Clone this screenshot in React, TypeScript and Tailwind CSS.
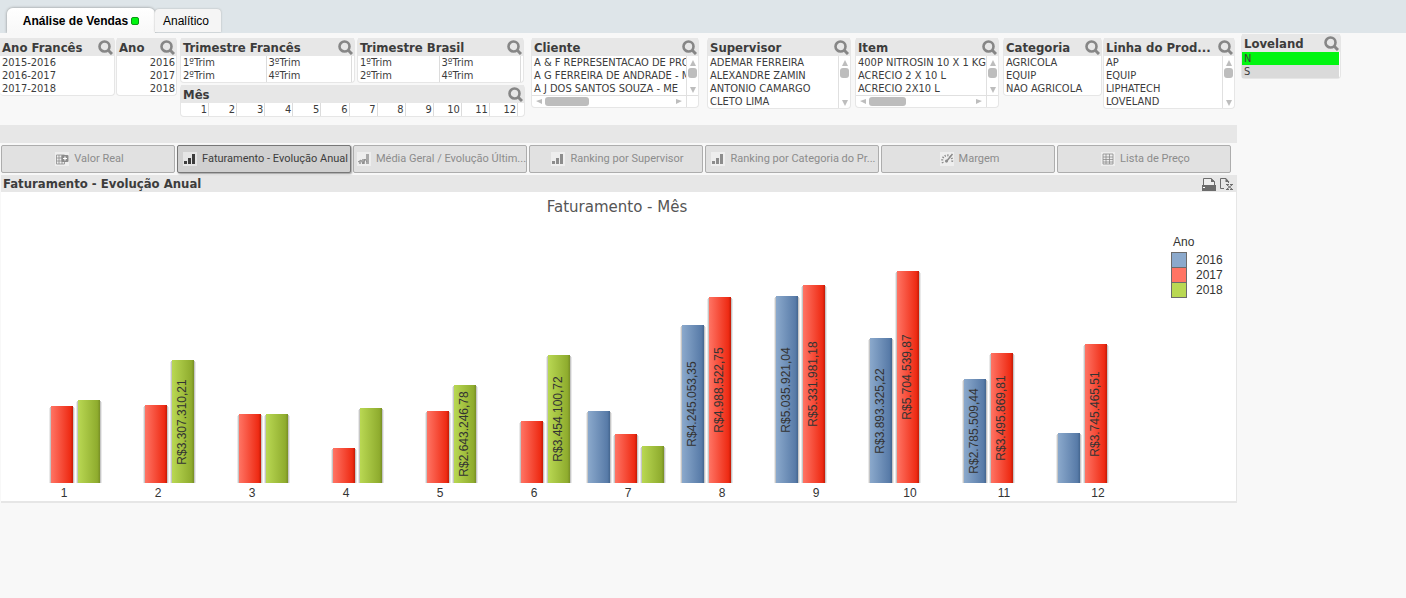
import { useState } from "react";
import type { ReactNode } from "react";
import clsx from "clsx";

type Year = "2016" | "2017" | "2018";

interface MonthSales {
  month: number;
  sales: Partial<Record<Year, number>>;
}

const SALES: MonthSales[] = [
  { month: 1, sales: { "2017": 2071300, "2018": 2232700 } },
  { month: 2, sales: { "2017": 2098200, "2018": 3307310.21 } },
  { month: 3, sales: { "2017": 1856100, "2018": 1856100 } },
  { month: 4, sales: { "2017": 941500, "2018": 2017500 } },
  { month: 5, sales: { "2017": 1936800, "2018": 2643246.78 } },
  { month: 6, sales: { "2017": 1667800, "2018": 3454100.72 } },
  { month: 7, sales: { "2016": 1936800, "2017": 1318100, "2018": 995300 } },
  { month: 8, sales: { "2016": 4245053.35, "2017": 4988522.75 } },
  { month: 9, sales: { "2016": 5035921.04, "2017": 5331981.18 } },
  { month: 10, sales: { "2016": 3893325.22, "2017": 5704539.87 } },
  { month: 11, sales: { "2016": 2785509.44, "2017": 3495869.81 } },
  { month: 12, sales: { "2016": 1345000, "2017": 3745465.51 } },
];

const YEARS: { year: Year; offset: number; colors: [string, string, string] }[] =
  [
    { year: "2016", offset: -40, colors: ["#8ba9cc", "#587ba8", "#44668f"] },
    { year: "2017", offset: -13, colors: ["#ff7464", "#ee2b14", "#c41b06"] },
    { year: "2018", offset: 14, colors: ["#b9d853", "#8fac2e", "#788f25"] },
  ];

const BASELINE = 291;
const VALUE_PER_PIXEL = 26890;
const MIN_LABEL_HEIGHT = 95;

function formatCurrency(value: number) {
  const [whole, cents] = value.toFixed(2).split(".");
  return `R$${whole.replace(/\B(?=(\d{3})+$)/g, ".")},${cents}`;
}

function SearchButton({ label }: { label: string }) {
  return (
    <button
      type="button"
      aria-label={`Pesquisar ${label}`}
      className="shrink-0 cursor-pointer"
    >
      <svg width="15" height="15" viewBox="0 0 15 15" fill="none">
        <circle cx="6.5" cy="6.5" r="5" stroke="#868686" strokeWidth="2.6" />
        <path d="M10 10l4 4" stroke="#868686" strokeWidth="3" />
      </svg>
    </button>
  );
}

function Panel({
  title,
  className,
  children,
}: {
  title: string;
  className?: string;
  children: ReactNode;
}) {
  return (
    <section
      className={clsx(
        "min-w-0 rounded-sm border-r border-b border-[#e6e6e6] bg-white",
        className,
      )}
    >
      <div className="flex h-[18px] items-center justify-between bg-[#e7e7e7] pr-px pl-[2px]">
        <h2 className="pt-px text-[13px] leading-[17px] font-bold whitespace-nowrap text-[#3c3c3c]">
          {title}
        </h2>
        <SearchButton label={title} />
      </div>
      {children}
    </section>
  );
}

function Options({
  items,
  alignRight = false,
}: {
  items: string[];
  alignRight?: boolean;
}) {
  return (
    <ul className="min-w-0 flex-1 overflow-hidden">
      {items.map((item) => (
        <li key={item}>
          <button
            type="button"
            className={clsx(
              "block w-full pt-px text-[11px] leading-3 whitespace-nowrap",
              alignRight ? "pr-px text-right" : "pl-[2px] text-left",
            )}
          >
            {item}
          </button>
        </li>
      ))}
    </ul>
  );
}

function Arrow({ points }: { points: string }) {
  return (
    <svg width="8" height="7" viewBox="0 0 8 7" className="shrink-0">
      <polygon points={points} fill="#bdbdbd" />
    </svg>
  );
}

function VerticalScroll() {
  return (
    <div className="flex w-3 shrink-0 flex-col items-center border-l border-[#e0e0e0] pt-1 pb-px">
      <Arrow points="4,0 7,6 1,6" />
      <div className="mt-px h-[10px] w-[9px] rounded-[3px] bg-[#bdbdbd]" />
      <div className="flex-1" />
      <Arrow points="1,0 7,0 4,6" />
    </div>
  );
}

function HorizontalScroll() {
  return (
    <div className="flex h-3 border-t border-[#e0e0e0]">
      <div className="flex flex-1 items-center gap-[2px] px-[3px]">
        <Arrow points="1,3 7,1 7,6" />
        <div className="h-[9px] w-[30%] rounded-[3px] bg-[#bdbdbd]" />
        <div className="flex-1" />
        <Arrow points="7,3 1,1 1,6" />
      </div>
      <div className="w-3 border-l border-[#e0e0e0]" />
    </div>
  );
}

function QuarterPanel({ title }: { title: string }) {
  return (
    <Panel title={title} className="border-l">
      <div className="flex pr-[2px]">
        <Options items={["1ºTrim", "2ºTrim"]} />
        <div className="flex min-w-0 flex-1 border-x border-[#dcdcdc]">
          <Options items={["3ºTrim", "4ºTrim"]} />
        </div>
      </div>
    </Panel>
  );
}

function MonthPanel() {
  return (
    <Panel title="Mês" className="border-l">
      <div className="grid grid-cols-12 pr-[6px]">
        {SALES.map(({ month }) => (
          <button
            key={month}
            type="button"
            className="border-r border-[#dcdcdc] pt-px pr-px text-right text-[11px] leading-3"
          >
            {month}
          </button>
        ))}
      </div>
    </Panel>
  );
}

function Filters() {
  return (
    <div className="grid grid-cols-[116fr_64fr_351fr_176fr_148fr_148fr_100fr_134fr] items-start pt-[5px]">
      <div className="min-w-0 pr-px">
        <Panel title="Ano Francês">
          <div className="flex">
            <Options items={["2015-2016", "2016-2017", "2017-2018"]} />
          </div>
        </Panel>
      </div>
      <div className="min-w-0 pr-[3px]">
        <Panel title="Ano" className="border-l">
          <div className="flex">
            <Options items={["2016", "2017", "2018"]} alignRight />
          </div>
        </Panel>
      </div>
      <div className="min-w-0 pr-[6px]">
        <div className="mb-[2px] grid grid-cols-[175fr_167fr] gap-x-[2px] pr-px">
          <QuarterPanel title="Trimestre Francês" />
          <QuarterPanel title="Trimestre Brasil" />
        </div>
        <MonthPanel />
      </div>
      <div className="min-w-0 pr-2">
        <Panel title="Cliente" className="border-l">
          <div className="flex">
            <Options
              items={[
                "A & F REPRESENTACAO DE PRO",
                "A G FERREIRA DE ANDRADE - M",
                "A J DOS SANTOS SOUZA - ME",
              ]}
            />
            <VerticalScroll />
          </div>
          <HorizontalScroll />
        </Panel>
      </div>
      <div className="min-w-0 pr-1">
        <Panel title="Supervisor" className="border-l">
          <div className="flex">
            <Options
              items={[
                "ADEMAR FERREIRA",
                "ALEXANDRE ZAMIN",
                "ANTONIO CAMARGO",
                "CLETO LIMA",
              ]}
            />
            <VerticalScroll />
          </div>
        </Panel>
      </div>
      <div className="min-w-0 pr-1">
        <Panel title="Item" className="border-l">
          <div className="flex">
            <Options
              items={[
                "400P NITROSIN 10 X 1 KG",
                "ACRECIO 2 X 10 L",
                "ACRECIO 2X10 L",
              ]}
            />
            <VerticalScroll />
          </div>
          <HorizontalScroll />
        </Panel>
      </div>
      <div className="min-w-0 pr-px">
        <Panel title="Categoria" className="border-l">
          <div className="flex">
            <Options items={["AGRICOLA", "EQUIP", "NAO AGRICOLA"]} />
          </div>
        </Panel>
      </div>
      <div className="min-w-0 pr-[2px]">
        <Panel title="Linha do Prod..." className="border-l">
          <div className="flex">
            <Options items={["AP", "EQUIP", "LIPHATECH", "LOVELAND"]} />
            <VerticalScroll />
          </div>
        </Panel>
      </div>
    </div>
  );
}

type IconKind = "tableAdd" | "bars" | "trend" | "gauge" | "table";

function ViewIcon({ kind }: { kind: IconKind }) {
  return (
    <svg
      width="14"
      height="14"
      viewBox="0 0 14 14"
      fill="none"
      className="shrink-0"
    >
      <rect width="14" height="14" fill="#fff" opacity="0.45" />
      {kind === "bars" && (
        <path d="M1 9h3v3H1zM5 6h3v6H5zM9 2h3v10H9z" fill="currentColor" />
      )}
      {kind === "trend" && (
        <>
          <path
            d="M2 9h2v3H2zM5 7h3v5H5zM9 2h3v10H9z"
            fill="currentColor"
            opacity="0.7"
          />
          <path
            d="M1 10l3-2 2 4 2-5 2 3"
            stroke="currentColor"
            strokeWidth="1"
          />
        </>
      )}
      {kind === "table" && (
        <path
          d="M2 2h10v10H2zM2 5h10M2 7.500h10M2 10h10M5 2v10M8.500 2v10"
          stroke="currentColor"
          strokeWidth="0.8"
        />
      )}
      {kind === "tableAdd" && (
        <>
          <path
            d="M1.500 3h8v9h-8zM1.500 6h8M1.500 9h8M4 3v9M7 3v9"
            stroke="currentColor"
            strokeWidth="0.8"
          />
          <rect x="6.500" y="3" width="7" height="7" rx="1" fill="currentColor" />
          <path d="M10 4.500v4M8 6.500h4" stroke="#fff" strokeWidth="1.2" />
        </>
      )}
      {kind === "gauge" && (
        <>
          <path
            d="M3 11a5 5 0 1 1 8.500 0"
            stroke="currentColor"
            strokeWidth="2"
            strokeDasharray="1.200 1.400"
          />
          <path d="M6 10l6.500-8" stroke="currentColor" strokeWidth="1.6" />
          <circle cx="6.500" cy="9" r="1.500" fill="currentColor" />
        </>
      )}
    </svg>
  );
}

const VIEWS: { label: string; icon: IconKind }[] = [
  { label: "Valor Real", icon: "tableAdd" },
  { label: "Faturamento - Evolução Anual", icon: "bars" },
  { label: "Média Geral / Evolução Últim...", icon: "trend" },
  { label: "Ranking por Supervisor", icon: "bars" },
  { label: "Ranking por Categoria do Pr...", icon: "bars" },
  { label: "Margem", icon: "gauge" },
  { label: "Lista de Preço", icon: "table" },
];

function ViewButtons() {
  const [active, setActive] = useState("Faturamento - Evolução Anual");

  return (
    <div className="flex gap-[2px] py-[2px] pr-[6px] pl-px">
      {VIEWS.map(({ label, icon }) => (
        <button
          key={label}
          type="button"
          onClick={() => setActive(label)}
          className={clsx(
            "flex h-7 min-w-0 flex-1 items-center justify-center gap-[5px] rounded-xs border pl-[3px] font-[Roboto,Tahoma,sans-serif] text-[11px] whitespace-nowrap",
            active === label
              ? "border-[#777] bg-[#d0d0d0] text-[#3c3c3c] shadow-[1px_1px_2px_#999]"
              : "border-[#adadad] bg-[#e1e1e1] text-[#8c8c8c]",
          )}
        >
          <ViewIcon kind={icon} />
          <span>{label}</span>
        </button>
      ))}
    </div>
  );
}

function SalesChart() {
  return (
    <svg
      viewBox="0 0 1235 309"
      role="img"
      aria-label="Faturamento - Mês"
      className="block w-full"
      fontFamily="'Liberation Sans', Arial, sans-serif"
      fontSize="12"
      fill="#333"
    >
      <defs>
        {YEARS.map(({ year, colors }) => (
          <linearGradient key={year} id={`bar-${year}`}>
            <stop offset="0" stopColor={colors[0]} />
            <stop offset="0.88" stopColor={colors[1]} />
            <stop offset="1" stopColor={colors[2]} />
          </linearGradient>
        ))}
      </defs>

      <text
        x="616"
        y="20"
        textAnchor="middle"
        fontFamily="'DejaVu Sans', Verdana, sans-serif"
        fontSize="15"
        fill="#555"
      >
        Faturamento - Mês
      </text>

      {SALES.map(({ month, sales }) => {
        const center = 63 + (month - 1) * 94;
        return (
          <g key={month}>
            {YEARS.map(({ year, offset }) => {
              const value = sales[year];
              if (!value) return null;
              const height = Math.round(value / VALUE_PER_PIXEL);
              const x = center + offset;
              const y = BASELINE - height;
              const textX = x + 14;
              const textY = y + Math.round(height / 2);
              return (
                <g key={year}>
                  <rect
                    x={x - 2}
                    y={y + 2}
                    width="26"
                    height={height - 2}
                    fill="#e9e9e9"
                  />
                  <rect
                    x={x - 1}
                    y={y + 1}
                    width="24"
                    height={height - 1}
                    fill="#c6c6c6"
                  />
                  <rect
                    x={x}
                    y={y}
                    width="22"
                    height={height}
                    fill={`url(#bar-${year})`}
                  />
                  {height > MIN_LABEL_HEIGHT && (
                    <text
                      x={textX}
                      y={textY}
                      textAnchor="middle"
                      transform={`rotate(-90 ${textX} ${textY})`}
                    >
                      {formatCurrency(value)}
                    </text>
                  )}
                </g>
              );
            })}
            <text x={center} y="305" textAnchor="middle">
              {month}
            </text>
          </g>
        );
      })}

      <text x="1172" y="54">
        Ano
      </text>
      {YEARS.map(({ year, colors }, i) => (
        <g key={year}>
          <rect
            x="1170.5"
            y={60.5 + i * 15}
            width="15"
            height="15"
            fill={colors[0]}
            stroke="#6b6b6b"
          />
          <text x="1195" y={72 + i * 15}>
            {year}
          </text>
        </g>
      ))}
    </svg>
  );
}

function ChartPanel() {
  return (
    <section className="ml-px border-r border-b-2 border-[#e6e6e6] bg-white">
      <div className="flex h-[17px] items-center justify-between bg-[#e7e7e7] pr-[2px] pl-[2px]">
        <h2 className="text-[13px] leading-[17px] font-bold text-[#3c3c3c]">
          Faturamento - Evolução Anual
        </h2>
        <div className="flex gap-1">
          <button type="button" aria-label="Imprimir">
            <svg width="14" height="14" viewBox="0 0 14 14">
              <path
                d="M1.500 8V1.500H9L12.500 4.500V8"
                fill="#eee"
                stroke="#6c6c6c"
              />
              <path d="M9 1v4h4z" fill="#6c6c6c" />
              <path d="M0 8h14v6H0z" fill="#6c6c6c" />
              <path d="M1 10h2v1H1z" fill="#fff" />
            </svg>
          </button>
          <button type="button" aria-label="Exportar para Excel">
            <svg width="14" height="14" viewBox="0 0 14 14" fill="none">
              <path d="M4 11.500H0.500V1.500H6L8.500 5v1" stroke="#6c6c6c" />
              <path d="M5.500 1v4h4z" fill="#6c6c6c" />
              <path
                d="M6 7.500h3M10 7.500h3M6 12.500h3M10 12.500h3M7 8l5 4M12 8l-5 4"
                stroke="#6c6c6c"
              />
            </svg>
          </button>
        </div>
      </div>
      <SalesChart />
    </section>
  );
}

function LovelandFilter() {
  const [selected, setSelected] = useState("N");

  return (
    <Panel title="Loveland" className="mt-px border-l">
      <ul className="pr-px">
        {["N", "S"].map((option) => (
          <li key={option}>
            <button
              type="button"
              aria-pressed={selected === option}
              onClick={() => setSelected(option)}
              className={clsx(
                "block w-full px-[2px] pt-px text-left text-[11px] leading-3",
                selected === option ? "bg-[#00f510]" : "bg-[#dadada]",
              )}
            >
              {option}
            </button>
          </li>
        ))}
      </ul>
    </Panel>
  );
}

export default function App() {
  return (
    <div className="min-h-screen bg-[#f8f8f8] font-['DejaVu_Sans_Condensed',Tahoma,'DejaVu_Sans',sans-serif] text-[#3c3c3c]">
      <nav className="flex h-[33px] items-end overflow-hidden bg-[#dee5e9] pl-[7px] font-['Liberation_Sans',Arial,sans-serif] text-xs text-black">
        <button
          type="button"
          className="flex h-[25px] w-[148px] items-center justify-center gap-[3px] rounded-t-md bg-linear-to-b from-white to-[#f8f8f8] font-bold shadow-[0_0_3px_#888]"
        >
          Análise de Vendas
          <span className="size-2 rounded-[2px] border border-[#0a9a14] bg-[#00f510]" />
        </button>
        <button
          type="button"
          className="mb-px h-[23px] w-[66px] rounded-t-sm bg-[#f5f5f5] pr-1 shadow-[0_0_2px_#aaa]"
        >
          Analítico
        </button>
      </nav>

      <div className="grid grid-cols-[1237fr_169fr] items-start">
        <main className="min-w-0">
          <div className="h-[92px]">
            <Filters />
          </div>
          <div className="h-[18px] bg-[#e7e7e7]" />
          <ViewButtons />
          <ChartPanel />
        </main>
        <aside className="min-w-0 pr-[65px] pl-1">
          <LovelandFilter />
        </aside>
      </div>
    </div>
  );
}
